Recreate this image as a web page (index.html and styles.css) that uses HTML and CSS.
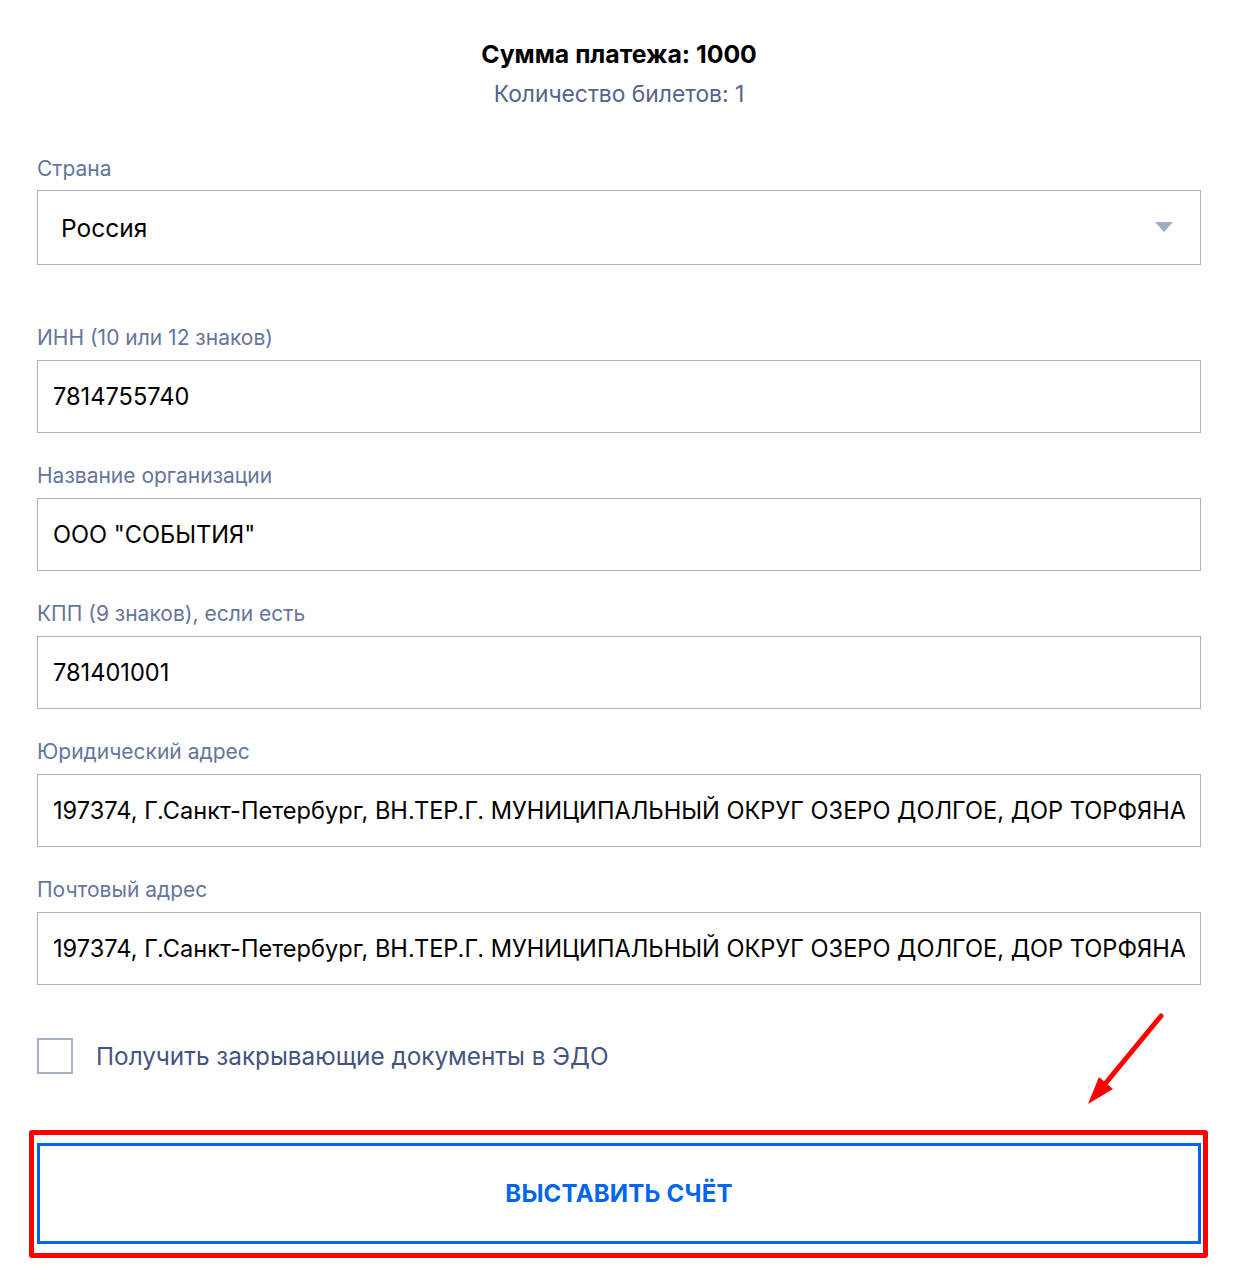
FILE: index.html
```html
<!DOCTYPE html>
<html lang="ru">

<head>
    <meta charset="UTF-8">
    <meta name="viewport" content="width=device-width, initial-scale=1.0">
    <title>Выставить счёт</title>
    <link rel="stylesheet" href="styles.css">
</head>

<body>
    <div class="container">
        <div class="summary">
            <h2>Сумма платежа: 1000</h2>
            <p>Количество билетов: 1</p>
        </div>

        <div class="field field-country">
            <label for="country">Страна</label>
            <div class="select">
                <span>Россия</span>
                <span class="caret"></span>
            </div>
        </div>

        <div class="field">
            <label for="inn">ИНН (10 или 12 знаков)</label>
            <input type="text" id="inn" value="7814755740">
        </div>
        <div class="field">
            <label for="org">Название организации</label>
            <input type="text" id="org" value='ООО "СОБЫТИЯ"'>
        </div>
        <div class="field">
            <label for="kpp">КПП (9 знаков), если есть</label>
            <input type="text" id="kpp" value="781401001">
        </div>
        <div class="field">
            <label for="legal">Юридический адрес</label>
            <input type="text" id="legal" value="197374, Г.Санкт-Петербург, ВН.ТЕР.Г. МУНИЦИПАЛЬНЫЙ ОКРУГ ОЗЕРО ДОЛГОЕ, ДОР ТОРФЯНАЯ, Д. 7, ЛИТЕРА Ф">
        </div>
        <div class="field">
            <label for="post">Почтовый адрес</label>
            <input type="text" id="post" value="197374, Г.Санкт-Петербург, ВН.ТЕР.Г. МУНИЦИПАЛЬНЫЙ ОКРУГ ОЗЕРО ДОЛГОЕ, ДОР ТОРФЯНАЯ, Д. 7, ЛИТЕРА Ф">
        </div>

        <label class="edo">
            <span class="box"></span>
            Получить закрывающие документы в ЭДО
        </label>

        <div class="submit-wrap">
            <button class="submit">ВЫСТАВИТЬ СЧЁТ</button>
            <span class="mark-frame"></span>
            <svg class="mark-arrow" width="90" height="100" viewBox="0 0 90 100">
                <line x1="73" y1="6" x2="17" y2="74" stroke="#ff0000" stroke-width="5" stroke-linecap="round"/>
                <polygon points="0,94 11,67 25,79" fill="#ff0000"/>
            </svg>
        </div>
    </div>
</body>

</html>
```

FILE: styles.css
```css
body {
  font-family: Inter, 'Noto Sans', Arial, sans-serif;
  background-color: #fff;
  color: #000;
  margin: 0;
}
.container {
  width: 1164px;
  margin-left: 37px;
  padding-top: 39px;
  padding-bottom: 23px;
}
.summary {
  text-align: center;
}
.summary h2 {
  margin: 0;
  font-size: 24.8px;
  line-height: 30px;
  font-weight: 700;
}
.summary p {
  margin: 10px 0 0;
  font-size: 22.8px;
  line-height: 30px;
  color: #55648a;
}
.field {
  display: flex;
  flex-direction: column;
  margin-top: 31px;
}
.field-country {
  margin-top: 48px;
  margin-bottom: 61px;
}
.field label {
  font-size: 21px;
  line-height: 24px;
  color: #66759a;
  margin-bottom: 10px;
}
.field-country label {
  margin-bottom: 9px;
}
.select {
  display: flex;
  align-items: center;
  justify-content: space-between;
  height: 75px;
  box-sizing: border-box;
  border: 1px solid #a7b1c9;
  padding: 0 27px 0 23px;
  font-size: 24.5px;
}
.caret {
  width: 0;
  height: 0;
  border-left: 9px solid transparent;
  border-right: 9px solid transparent;
  border-top: 10px solid #a0aac4;
  margin-top: -2px;
}
input[type="text"] {
  height: 73px;
  box-sizing: border-box;
  border: 1px solid #a7b1c9;
  border-radius: 0;
  padding: 0 15px;
  font-family: inherit;
  font-size: 23.6px;
  color: #000;
  outline: none;
}
.edo {
  display: flex;
  align-items: center;
  margin-top: 53px;
  font-size: 24.3px;
  color: #445480;
  cursor: pointer;
}
.edo .box {
  width: 36px;
  height: 36px;
  box-sizing: border-box;
  border: 2px solid #a7b1c9;
  margin-right: 23px;
}
.submit-wrap {
  position: relative;
  margin-top: 69px;
}
.submit {
  display: block;
  width: 100%;
  height: 101px;
  background-color: #fff;
  border: 3px solid #0066ee;
  color: #0066ee;
  font-family: inherit;
  font-size: 24px;
  font-weight: 700;
  letter-spacing: 0.2px;
  cursor: pointer;
}
.mark-frame {
  position: absolute;
  left: -8px;
  top: -13px;
  width: 1179px;
  height: 128px;
  box-sizing: border-box;
  border: 5px solid #ff0000;
  border-radius: 3px;
  pointer-events: none;
}
.mark-arrow {
  position: absolute;
  left: 1051px;
  top: -133px;
  pointer-events: none;
}
```
